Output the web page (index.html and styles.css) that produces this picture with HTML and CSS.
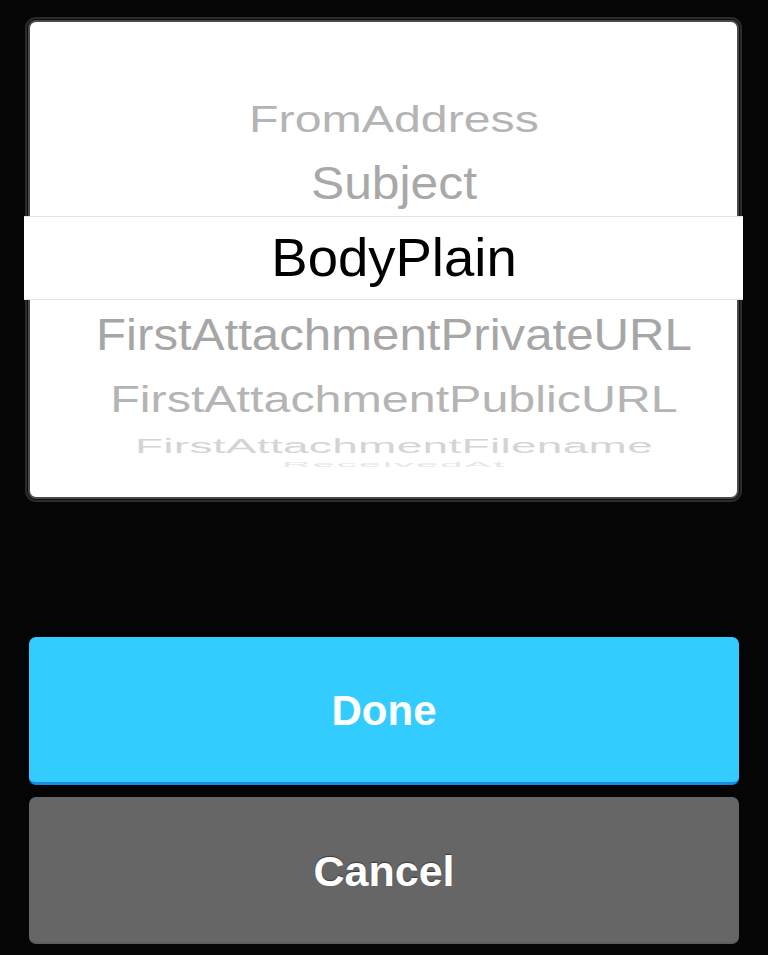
FILE: index.html
```html
<!DOCTYPE html>
<html>
<head>
<meta charset="utf-8">
<link rel="stylesheet" href="styles.css">
</head>
<body>
<div class="sheet">
  <div class="picker">
    <div class="wheel">
      <div class="row r-from"><span>FromAddress</span></div>
      <div class="row r-subject"><span>Subject</span></div>
      <div class="row selected"><span>BodyPlain</span></div>
      <div class="row r-private"><span>FirstAttachmentPrivateURL</span></div>
      <div class="row r-public"><span>FirstAttachmentPublicURL</span></div>
      <div class="row r-filename"><span>FirstAttachmentFilename</span></div>
      <div class="row r-last"><span>ReceivedAt</span></div>
    </div>
  </div>
  <div class="actions">
    <div class="btn btn-done">Done</div>
    <div class="btn btn-cancel">Cancel</div>
  </div>
</div>
</body>
</html>
```

FILE: styles.css
```css
html, body {
  margin: 0;
  padding: 0;
  background: #050505;
}
body {
  font-family: "Liberation Sans", Arial, Helvetica, sans-serif;
  width: 768px;
  height: 955px;
  overflow: hidden;
}
.sheet {
  padding-top: 20px;
}
.picker {
  margin: 0 29px 0 28px;
  background: #fff;
  border: 2px solid #4a4a4a;
  border-radius: 8px;
  box-shadow: 0 0 0 1px #0c0c0c, 0 0 0 3px #2c2c2c;
  padding-bottom: 29px;
}
.wheel {
  height: 446px;
  box-sizing: border-box;
  padding-top: 66px;
  overflow-x: visible;
  overflow-y: clip;
  display: flex;
  flex-direction: column;
}
.row {
  flex: none;
  display: flex;
  align-items: center;
  justify-content: center;
  white-space: nowrap;
  color: #a8a8a8;
  font-size: 49px;
  padding-left: 21px;
}
.row span {
  display: inline-block;
  line-height: 1;
}
.r-from { height: 63px; font-size: 48.3px; color: #b4b4b4; }
.r-from span { transform: scaleY(0.76); }
.r-subject { height: 65px; font-size: 49.8px; color: #a8a8a8; }
.r-subject span { transform: scaleY(0.91); }
.selected {
  height: 82px;
  margin: 0 -6px;
  background: #fff;
  border-top: 1px solid #e2e2e2;
  border-bottom: 1px solid #e2e2e2;
  color: #000;
  font-size: 54.5px;
  position: relative;
  z-index: 1;
}
.r-private { height: 68px; font-size: 49.2px; color: #a6a6a6; }
.r-private span { transform: scaleY(0.92); }
.r-public { height: 62px; font-size: 48.4px; color: #b4b4b4; }
.r-public span { transform: scaleY(0.75); }
.r-filename { height: 31px; font-size: 46px; color: #d4d4d4; letter-spacing: 0.3px; }
.r-filename span { transform: scaleY(0.45); }
.r-last { height: 7px; font-size: 40px; color: #e6e6e6; letter-spacing: 2px; }
.r-last span { transform: scaleY(0.17); }

.actions {
  margin-top: 138px;
  display: flex;
  flex-direction: column;
  gap: 12px;
}
.btn {
  margin: 0 29px;
  border-radius: 7px;
  display: flex;
  align-items: center;
  justify-content: center;
  color: #fff;
  font-weight: bold;
  box-sizing: border-box;
}
.btn-done {
  background: #33ccff;
  border-bottom: 3px solid #1589e6;
  height: 148px;
  padding-top: 3px;
  font-size: 42px;
}
.btn-cancel {
  background: #666;
  border-bottom: 2px solid #5e5e5e;
  height: 147px;
  padding-top: 4px;
  font-size: 43px;
  text-shadow: 0 -1px 1px rgba(0, 0, 0, 0.45);
}
```
